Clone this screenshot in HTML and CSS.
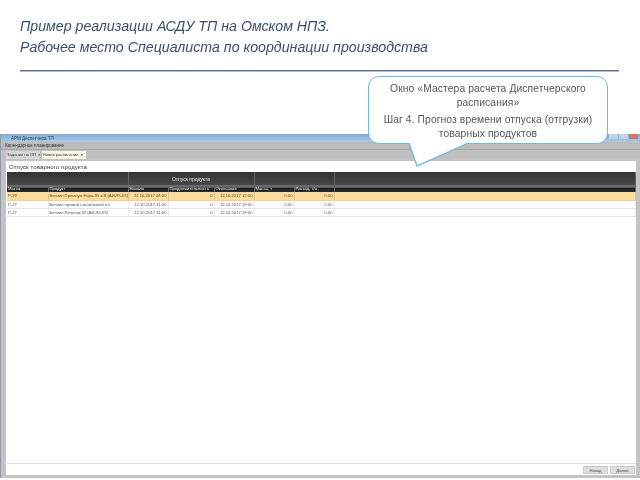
FILE: index.html
```html
<!DOCTYPE html>
<html lang="ru">
<head>
    <meta charset="UTF-8">
    <title>АСДУ ТП</title>
    <link rel="stylesheet" href="styles.css">
</head>
<body>
    <div class="slide">
        <div class="heading">
            <h1>Пример реализации АСДУ ТП на Омском НПЗ.<br>Рабочее место Специалиста по координации производства</h1>
            <div class="rule"></div>
        </div>

        <div class="callout">
            <p>Окно «Мастера расчета Диспетчерского расписания»</p>
            <p>Шаг 4. Прогноз времени отпуска (отгрузки) товарных продуктов</p>
            <svg class="callout-tail" width="72" height="26" viewBox="0 0 72 26">
                <path d="M1 0 L9 23 L60 0" fill="#fff" stroke="#6fb9dc" stroke-width="1.3"/>
                <path d="M2 -1 H59" stroke="#fff" stroke-width="2"/>
            </svg>
        </div>

        <div class="window">
            <div class="titlebar">
                <span>АРМ Диспетчера ТП</span>
                <div class="win-btns"><i></i><i></i><i class="close"></i></div>
            </div>
            <div class="menubar">Календарное планирование</div>
            <div class="tabs">
                <div class="tab">Задания на ОП <b>×</b></div>
                <div class="tab active">Новое расписание <b>×</b></div>
            </div>
            <div class="page">
                <div class="page-title">Отпуск товарного продукта</div>
                <table class="grid">
                    <colgroup>
                        <col class="c1"><col class="c2"><col class="c3"><col class="c4"><col class="c5"><col class="c6"><col class="c7"><col>
                    </colgroup>
                    <thead>
                        <tr class="group">
                            <th colspan="2"></th>
                            <th colspan="3">Отпуск продукта</th>
                            <th colspan="2"></th>
                            <th></th>
                        </tr>
                        <tr class="names">
                            <th>Маска</th><th>Продукт</th><th>Начало</th><th>Продолжительность</th><th>Окончание</th><th>Масса, т</th><th>Расход, т/ч</th><th></th>
                        </tr>
                    </thead>
                    <tbody>
                        <tr class="selected">
                            <td>Р-29</td><td>Бензин Премиум Евро-95 к.В (АИ-95-К5)</td><td class="num">12.10.2017 04:00</td><td class="num">0</td><td class="num">12.10.2017 12:00</td><td class="num">0.00</td><td class="num">0.00</td><td></td>
                        </tr>
                        <tr>
                            <td>Р-27</td><td>Бензин прямой стабильный н.б</td><td class="num">12.10.2017 11:00</td><td class="num">0</td><td class="num">12.10.2017 19:00</td><td class="num">0.00</td><td class="num">0.00</td><td></td>
                        </tr>
                        <tr>
                            <td>Р-27</td><td>Бензин Регуляр-92 (АИ-92-К5)</td><td class="num">12.10.2017 11:00</td><td class="num">0</td><td class="num">12.10.2017 19:00</td><td class="num">0.00</td><td class="num">0.00</td><td></td>
                        </tr>
                    </tbody>
                </table>
                <div class="page-footer">
                    <button>Назад</button>
                    <button>Далее</button>
                </div>
            </div>
        </div>
    </div>
</body>
</html>
```
FILE: styles.css
```css
* {
    margin: 0;
    padding: 0;
    box-sizing: border-box;
}

body {
    background: #fff;
    font-family: "Liberation Sans", Arial, sans-serif;
    overflow: hidden;
}

.slide {
    width: 640px;
    height: 480px;
    position: relative;
    display: flex;
    flex-direction: column;
}

/* Slide heading */
.heading {
    height: 134px;
    padding: 16px 21px 0 20px;
}

h1 {
    font-size: 14.2px;
    line-height: 21px;
    font-weight: normal;
    font-style: italic;
    color: #3b4f70;
    filter: blur(0.3px);
}

.rule {
    height: 1px;
    margin-top: 12px;
    background: #5d6f8c;
    box-shadow: 0 1px 0 #b7c0cd;
}

/* Speech bubble */
.callout {
    position: absolute;
    left: 368px;
    top: 76px;
    width: 240px;
    height: 68px;
    padding: 5px 6px 0;
    background: #fff;
    border: 1.3px solid #6fb9dc;
    border-radius: 11px;
    text-align: center;
    font-size: 10.3px;
    line-height: 14px;
    letter-spacing: 0.1px;
    color: #555;
    z-index: 2;
}

.callout p {
    margin-bottom: 3px;
    filter: blur(0.25px);
}

.callout-tail {
    position: absolute;
    left: 39px;
    top: 66px;
    overflow: visible;
}

/* Application window */
.window {
    height: 344px;
    display: flex;
    flex-direction: column;
    background: #c3c3c3;
    border-left: 1px solid #8f9aa5;
    font-size: 4.5px;
    filter: blur(0.35px);
}

.titlebar {
    height: 8px;
    padding: 0 0 0 10px;
    display: flex;
    justify-content: space-between;
    align-items: center;
    background: linear-gradient(#86abd3, #a9cbe9);
    color: #2c3e55;
}

.win-btns {
    display: flex;
    align-self: flex-start;
    gap: 1px;
    margin-right: 2px;
}

.win-btns i {
    width: 9px;
    height: 5px;
    background: #c4d2e0;
}

.win-btns .close {
    background: #d9736a;
}

.menubar {
    height: 8px;
    padding-left: 4px;
    line-height: 7px;
    background: #bcbcbc;
    border-bottom: 1px solid #a9a9a9;
    color: #333;
}

.tabs {
    height: 9px;
    padding: 1px 0 0 5px;
    display: flex;
    gap: 2px;
    background: #c0c0c0;
    font-size: 4.1px;
}

.tab {
    width: 34px;
    height: 8px;
    line-height: 8px;
    padding-left: 1px;
    color: #333;
    background: #d6d6d6;
    white-space: nowrap;
    overflow: hidden;
}

.tab.active {
    width: 44px;
    background: #fbf6e4;
}

.tab b {
    margin-left: 1px;
}

.page {
    flex: 1;
    margin: 2px 4px 3px 5px;
    background: #fff;
    display: flex;
    flex-direction: column;
    padding-left: 1px;
}

.page-title {
    height: 11px;
    padding: 3px 0 0 2px;
    font-size: 6px;
    line-height: 7px;
    letter-spacing: 0.1px;
    color: #333;
}

.grid {
    width: 629px;
    border-collapse: collapse;
    table-layout: fixed;
    font-size: 4.2px;
}

.c1 { width: 41px; }
.c2 { width: 80px; }
.c3 { width: 40px; }
.c4 { width: 46px; }
.c5 { width: 40px; }
.c6 { width: 40px; }
.c7 { width: 40px; }

.grid th {
    background: #3a3a3a;
    color: #e8e8e8;
    font-weight: normal;
    text-align: left;
    padding: 0 1px;
    border-right: 1px solid #666;
    overflow: hidden;
    white-space: nowrap;
}

.group th {
    height: 13px;
    background: linear-gradient(#333, #474747);
    text-align: center;
    font-size: 5px;
}

.names th {
    height: 7px;
    background: linear-gradient(#6b6b6b 30%, #1f1f1f 50%, #2b2b2b);
}

.grid td {
    height: 8px;
    padding: 0 1px;
    color: #555;
    border-right: 1px solid #e8e8e8;
    border-bottom: 1px solid #e4e4e4;
    overflow: hidden;
    white-space: nowrap;
}

.grid .num {
    text-align: right;
}

.selected td {
    background: #fbdc9e;
    color: #5c4a2a;
    border-right-color: #e5c489;
    border-bottom-color: #f2cf8e;
}

.page-footer {
    margin-top: auto;
    height: 12px;
    padding: 2px 1px 0 0;
    display: flex;
    justify-content: flex-end;
    gap: 2px;
    border-top: 1px solid #dcdcdc;
}

.page-footer button {
    width: 25px;
    height: 8px;
    font-family: inherit;
    font-size: 4.2px;
    color: #444;
    background: #dedede;
    border: 1px solid #c8c8c8;
}
```
